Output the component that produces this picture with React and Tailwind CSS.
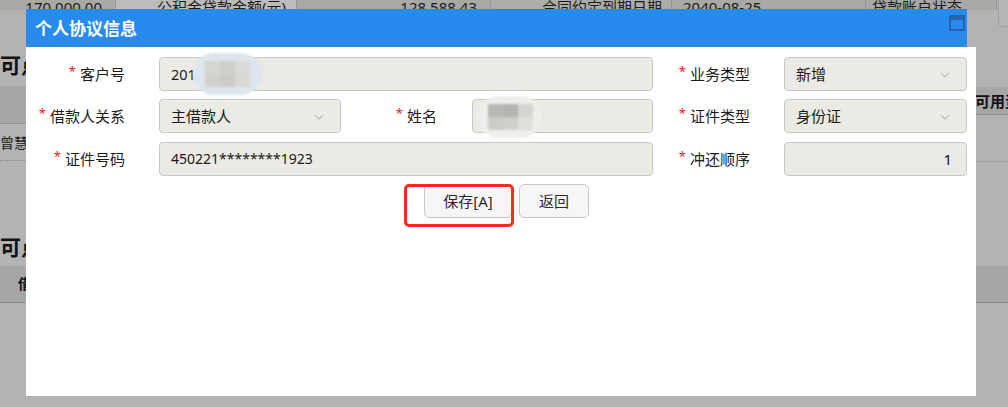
const font = "font-['Noto_Sans','Noto_Sans_CJK_SC',sans-serif]";

const Star = () => (
    <span className="text-[#f01818] text-[13px] leading-none mr-[4px] relative top-[-3px]">*</span>
);

const Label = ({ text, w }) => (
    <div className={`${w} shrink-0 flex items-center justify-end text-[15px] leading-none text-[#1c1c1c] whitespace-nowrap`}>
        <Star />
        <span>{text}</span>
    </div>
);

const Chevron = () => (
    <svg width="10" height="6" viewBox="0 0 10 6" className="absolute right-[16px] top-[14px]">
        <path d="M1 1l4 4 4-4" fill="none" stroke="#c2c2c2" strokeWidth="1.3" />
    </svg>
);

const Field = ({ w, children, select, right }) => (
    <div className={`${w} h-[34px] shrink-0 relative flex items-center rounded-[4px] border border-[#c9c9c4] bg-[#ebeae4] text-[15px] leading-none text-[#1a1a1a] ${right ? "justify-end pr-[14px]" : "pl-[11px]"}`}>
        {children}
        {select && <Chevron />}
    </div>
);

const Mosaic = ({ cells }) => (
    <div className="grid grid-cols-3 w-[45px]">
        {cells.map((c, i) => (
            <div key={i} className="h-[13px]" style={{ background: c }} />
        ))}
    </div>
);

const Button = ({ children, w }) => (
    <div className={`${w} h-[34px] flex items-center justify-center rounded-[5px] border border-[#c8c8c8] bg-[#f6f6f6] text-[15px] leading-none text-[#2a2a2a]`}>
        {children}
    </div>
);

const Backdrop = () => (
    <div className="w-full h-[407px] bg-[#b3b3b3] overflow-hidden">
        {/* top table row, mostly under the dialog */}
        <div className="flex items-start h-[27px] text-[15px] text-[#1a1a1a] leading-none">
            <div className="w-[116px] h-[10px] bg-[#a8a8a4] border-r border-[#959595] flex items-end justify-end pr-[13px]">
                <span className="relative top-[5px]">170,000.00</span>
            </div>
            <div className="w-[181px] h-[10px] bg-[#bcbcbc] border-r border-[#959595] flex items-end justify-end pr-[10px]">
                <span className="relative top-[5px]">公积金贷款金额(元)</span>
            </div>
            <div className="w-[194px] h-[10px] bg-[#a8a8a4] border-r border-[#959595] flex items-end justify-end pr-[13px]">
                <span className="relative top-[5px]">128,588.43</span>
            </div>
            <div className="w-[181px] h-[10px] bg-[#acaca8] border-r border-[#959595] flex items-end justify-end pr-[9px]">
                <span className="relative top-[5px]">合同约定到期日期</span>
            </div>
            <div className="w-[194px] h-[10px] bg-[#a8a8a4] border-r border-[#959595] flex items-end pl-[11px]">
                <span className="relative top-[5px]">2040-08-25</span>
            </div>
            <div className="w-[131px] h-[10px] bg-[#a8a8a4] border-r border-[#959595] flex items-end pl-[6px]">
                <span className="relative top-[5px]">贷款账户状态</span>
            </div>
            <div className="flex-1 h-[27px] ml-[1px] bg-[#b6b6b6] border-l border-b border-[#a0a0a0] rounded-bl-[5px]" />
        </div>

        <div className="flex">
            <div className="w-[26px] shrink-0 overflow-hidden">
                <div className="mt-[27px] h-[22px] text-[21px] leading-[22px] font-bold text-[#111] whitespace-nowrap">可点击贷款</div>
                <div className="mt-[10px] h-[38px] bg-[#a6a6a6] border-b border-[#8f8f8f]" />
                <div className="h-[37px] border-b border-dotted border-[#8a8a8a] flex items-end pb-[10px] text-[14px] leading-none text-[#1a1a1a] whitespace-nowrap">曾慧</div>
                <div className="mt-[75px] h-[22px] text-[21px] leading-[22px] font-bold text-[#111] whitespace-nowrap">可点击贷款</div>
                <div className="mt-[8px] h-[37px] bg-[#a6a6a6] border-b border-[#8f8f8f] flex items-center pl-[18px] text-[14px] font-bold leading-none text-[#111] whitespace-nowrap">借款人</div>
            </div>
            <div className="flex-1" />
            <div className="w-[33px] shrink-0 overflow-hidden">
                <div className="mt-[60px] h-[28px] bg-[#a6a6a6] border-b border-[#8f8f8f] flex items-center pt-[2px] text-[15px] font-bold leading-none text-[#111] whitespace-nowrap">可用资金</div>
                <div className="h-[47px] border-b border-dotted border-[#8a8a8a]" />
                <div className="mt-[104px] h-[37px] bg-[#a6a6a6] border-b border-[#8f8f8f]" />
            </div>
        </div>
    </div>
);

const Dialog = () => (
    <div className="absolute left-[26px] top-[9px] w-[950px]">
        <div className="w-[941px] h-[38px] bg-[#268bec] flex justify-between">
            <div className="self-center pl-[9px] text-[17px] font-bold leading-none text-white">个人协议信息</div>
            <div className="mt-[6px] mr-[2px] w-[16px] h-[16px] border-[2px] border-t-[5px] border-[#2564ab] rounded-[1px]" />
        </div>
        <div className="h-[349px] bg-white pt-[10px]">
            {/* row 1 */}
            <div className="flex h-[34px]">
                <Label text="客户号" w="w-[99px]" />
                <div className="w-[34px] shrink-0" />
                <Field w="w-[494px]">
                    <span className="text-[14.5px]">201</span>
                    <div className="absolute left-[33px] top-[-5px] w-[69px] h-[42px] rounded-[22px] bg-[#dde5ee] flex items-center justify-center blur-[1px]">
                        <Mosaic cells={["#d6d6d1", "#cfcfca", "#dadad5", "#d1d1cc", "#cccbc6", "#d8d8d3"]} />
                    </div>
                </Field>
                <Label text="业务类型" w="w-[97px]" />
                <div className="w-[34px] shrink-0" />
                <Field w="w-[183px]" select>新增</Field>
            </div>
            {/* row 2 */}
            <div className="flex h-[34px] mt-[8px]">
                <Label text="借款人关系" w="w-[99px]" />
                <div className="w-[34px] shrink-0" />
                <Field w="w-[182px]" select>主借款人</Field>
                <Label text="姓名" w="w-[96px]" />
                <div className="w-[35px] shrink-0" />
                <Field w="w-[181px]">
                    <div className="absolute left-[5px] top-[-4px] w-[64px] h-[42px] rounded-[22px] bg-[#eeeeec] flex items-center justify-center blur-[1px]">
                        <Mosaic cells={["#b8b8b4", "#b3b3af", "#d4d4d0", "#cbcbc7", "#cfcfcb", "#dededa"]} />
                    </div>
                </Field>
                <Label text="证件类型" w="w-[97px]" />
                <div className="w-[34px] shrink-0" />
                <Field w="w-[183px]" select>身份证</Field>
            </div>
            {/* row 3 */}
            <div className="flex h-[34px] mt-[9px]">
                <Label text="证件号码" w="w-[99px]" />
                <div className="w-[34px] shrink-0" />
                <Field w="w-[494px]">
                    <span className="text-[14px]">450221********1923</span>
                </Field>
                <Label text="冲还顺序" w="w-[97px]" />
                <div className="w-[34px] shrink-0" />
                <Field w="w-[183px]" right>
                    <span className="text-[#0b0b6e]">1</span>
                </Field>
            </div>
            {/* buttons */}
            <div className="flex gap-[7px] mt-[8px] pl-[398px]">
                <div className="relative">
                    <Button w="w-[88px]">保存[A]</Button>
                    <div className="absolute left-[-20px] top-[0px] w-[110px] h-[43px] border-[3px] border-[#ff2a1f] rounded-[5px]" />
                </div>
                <Button w="w-[70px]">返回</Button>
            </div>
        </div>
    </div>
);

export default function App() {
    return (
        <div className={`relative w-full h-[407px] overflow-hidden ${font}`}>
            <Backdrop />
            <Dialog />
        </div>
    );
}
